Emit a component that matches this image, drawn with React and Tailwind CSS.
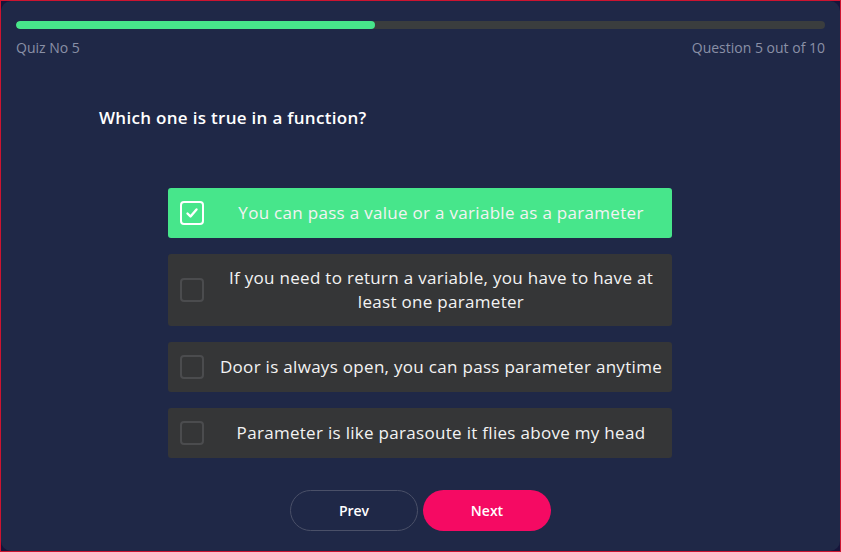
import React from "react";

const options = [
  { text: "You can pass a value or a variable as a parameter", checked: true },
  { text: "If you need to return a variable, you have to have at least one parameter" },
  { text: "Door is always open, you can pass parameter anytime" },
  { text: "Parameter is like parasoute it flies above my head" },
];

function Option({ text, checked }) {
  return (
    <div
      className={`flex items-center min-h-[50px] rounded-[3px] pl-3 py-3 ${
        checked ? "bg-[#47e68b]" : "bg-[#353637]"
      }`}
    >
      <div
        className={`w-[24px] h-[24px] shrink-0 rounded-[4px] border-2 flex items-center justify-center ${
          checked ? "border-white" : "border-[#4b4c4e]"
        }`}
      >
        {checked && (
          <svg width="16" height="16" viewBox="0 0 16 16" fill="none">
            <path d="M3.5 8.5 L6.5 11.5 L12.5 4.5" stroke="white" strokeWidth="2.4" strokeLinecap="round" strokeLinejoin="round" />
          </svg>
        )}
      </div>
      <div className="flex-1 text-center text-[17px] leading-[24px] tracking-[0.3px] text-[#f3f3f3] pl-[10px] pr-1">{text}</div>
    </div>
  );
}

export default function App() {
  return (
    <div
      className="w-[841px] h-[552px] border border-[#cc1430] bg-[#17143a]"
      style={{ fontFamily: "'Open Sans', sans-serif" }}
    >
      <div className="h-full rounded-[10px] bg-[#1f2847] px-[15px] pt-[20px] flex flex-col">
        <div className="h-[8px] rounded-full bg-[#3a3d3e] overflow-hidden">
          <div className="h-full w-[359px] rounded-full bg-[#47e68b]" />
        </div>
        <div className="flex justify-between mt-[9px] text-[14px] leading-[20px] text-[#8a90a6] font-medium">
          <span>Quiz No 5</span>
          <span>Question 5 out of 10</span>
        </div>
        <div className="mt-[48px] pl-[83px] text-[17px] leading-[24px] tracking-[0.3px] font-semibold text-white">
          Which one is true in a function?
        </div>
        <div className="mt-[58px] ml-[152px] w-[504px] flex flex-col gap-4">
          {options.map((o, i) => (
            <Option key={i} {...o} />
          ))}
        </div>
        <div className="mt-[32px] flex justify-center gap-[5px]">
          <button className="w-[128px] h-[41px] rounded-full border border-[#4a5068] text-white text-[14px] font-semibold">
            Prev
          </button>
          <button className="w-[128px] h-[41px] rounded-full bg-[#f50a63] text-white text-[14px] font-semibold">
            Next
          </button>
        </div>
      </div>
    </div>
  );
}
